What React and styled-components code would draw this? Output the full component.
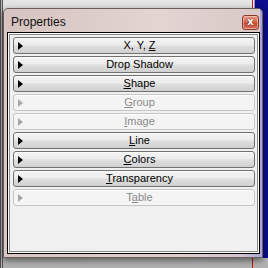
import React from "react";
import styled, { createGlobalStyle } from "styled-components";

const GlobalStyle = createGlobalStyle`
  html, body {
    margin: 0;
    padding: 0;
    background: #d2d2d2;
  }
  #root {
    width: 268px;
    height: 268px;
    overflow: hidden;
  }
`;

const Desktop = styled.div`
  position: relative;
  width: 268px;
  height: 268px;
  overflow: hidden;
  background:
    linear-gradient(to right, #505050 0, #505050 1px, #b4b4b4 1px, #b4b4b4 2px, #555 2px, #555 3px, transparent 3px),
    linear-gradient(to bottom, #e6e6e6 0px, #dcdcdc 8px, #d0d0d0 240px, #b0b0b0 268px);
`;

// window behind, only its left edge shows
const BackWindow = styled.div`
  position: absolute;
  left: 252px;
  top: 0;
  width: 16px;
  height: 258px;
  border-left: 1px solid #d01010;
  box-shadow: inset 1px 0 0 #f4f4f4, inset 2px 0 0 #8e8ec8;
  background: #0c0c8c;
`;

const RedLine = styled.div`
  position: absolute;
  left: 252px;
  top: 258px;
  width: 1px;
  height: 10px;
  background: #d01010;
`;

const Window = styled.div`
  position: absolute;
  left: 3px;
  top: 8px;
  width: 260px;
  height: 250px;
  box-sizing: border-box;
  display: flex;
  flex-direction: column;
  border: 1px solid #6a5e5c;
  border-radius: 5px 5px 0 0;
  background: linear-gradient(to right, #d8c7c4 0%, #dccdca 70%, #cfc4d0 92%, #a9a2d4 100%);
  box-shadow: 0 3px 6px rgba(0, 0, 0, 0.5);
  padding: 0 2px 3px 3px;
`;

const TitleBar = styled.div`
  height: 23px;
  display: flex;
  align-items: center;
  justify-content: space-between;
  padding: 0 1px 0 4px;
  background: linear-gradient(to right, #d6c3bf, #e2d5d2 60%, #d8c8c6);
`;

const Title = styled.span`
  font-family: "Liberation Sans", Arial, sans-serif;
  font-size: 12px;
  color: #111;
  margin-top: 2px;
`;

const CloseButton = styled.div`
  width: 15px;
  height: 13px;
  margin-top: 3px;
  border: 1px solid #8a3a2c;
  border-radius: 3px;
  background: linear-gradient(to bottom, #e89a86 0%, #d66a50 45%, #c24a30 55%, #d4705a 100%);
  box-shadow: inset 0 0 0 1px rgba(255, 220, 210, 0.5);
  display: flex;
  align-items: center;
  justify-content: center;
  color: #fff;
  font-family: "DejaVu Sans", sans-serif;
  font-size: 10px;
  font-weight: bold;
  line-height: 1;
  text-shadow: 0 0 1px #5a1a10, 0 0 1px #5a1a10;
`;

const Panel = styled.div`
  flex: 1;
  border: 1px solid #000;
  box-shadow: inset 0 0 0 1px #fafafa, inset 0 0 0 2px #8c8c8c;
  background: #f0f0f0;
  padding: 4px 4px 3px 5px;
  display: flex;
  flex-direction: column;
  gap: 2px;
`;

const Section = styled.div`
  height: 17px;
  box-sizing: border-box;
  display: flex;
  align-items: center;
  padding-left: 4px;
  border: 1px solid ${(p) => (p.disabled ? "#c6c6c6" : "#707070")};
  border-radius: 3px;
  background: ${(p) =>
    p.disabled
      ? "#f4f4f4"
      : "linear-gradient(to bottom, #f4f4f4 0%, #ececec 45%, #dedede 55%, #d0d0d0 100%)"};
  box-shadow: inset 0 1px 0 #fcfcfc;
`;

const Arrow = styled.span`
  width: 0;
  height: 0;
  border-top: 4px solid transparent;
  border-bottom: 4px solid transparent;
  border-left: 5px solid ${(p) => (p.disabled ? "#a8a8a8" : "#000")};
  margin-right: 2px;
`;

const Label = styled.span`
  flex: 1;
  text-align: center;
  font-family: "Liberation Sans", Arial, sans-serif;
  font-size: 11px;
  line-height: 15px;
  color: ${(p) => (p.disabled ? "#8a8a8a" : "#000")};
  u {
    text-decoration: underline;
    text-underline-offset: 1px;
  }
`;

const sections = [
  { pre: "X, Y, ", key: "Z", post: "" },
  { pre: "Drop Shadow", key: "", post: "" },
  { pre: "", key: "S", post: "hape" },
  { pre: "", key: "G", post: "roup", disabled: true },
  { pre: "", key: "I", post: "mage", disabled: true },
  { pre: "", key: "L", post: "ine" },
  { pre: "", key: "C", post: "olors" },
  { pre: "", key: "T", post: "ransparency" },
  { pre: "T", key: "a", post: "ble", disabled: true },
];

export default function App() {
  return (
    <Desktop>
      <GlobalStyle />
      <BackWindow />
      <RedLine />
      <Window>
        <TitleBar>
          <Title>Properties</Title>
          <CloseButton>x</CloseButton>
        </TitleBar>
        <Panel>
          {sections.map((s, i) => (
            <Section key={i} disabled={s.disabled}>
              <Arrow disabled={s.disabled} />
              <Label disabled={s.disabled}>
                {s.pre}
                {s.key && <u>{s.key}</u>}
                {s.post}
              </Label>
            </Section>
          ))}
        </Panel>
      </Window>
    </Desktop>
  );
}
